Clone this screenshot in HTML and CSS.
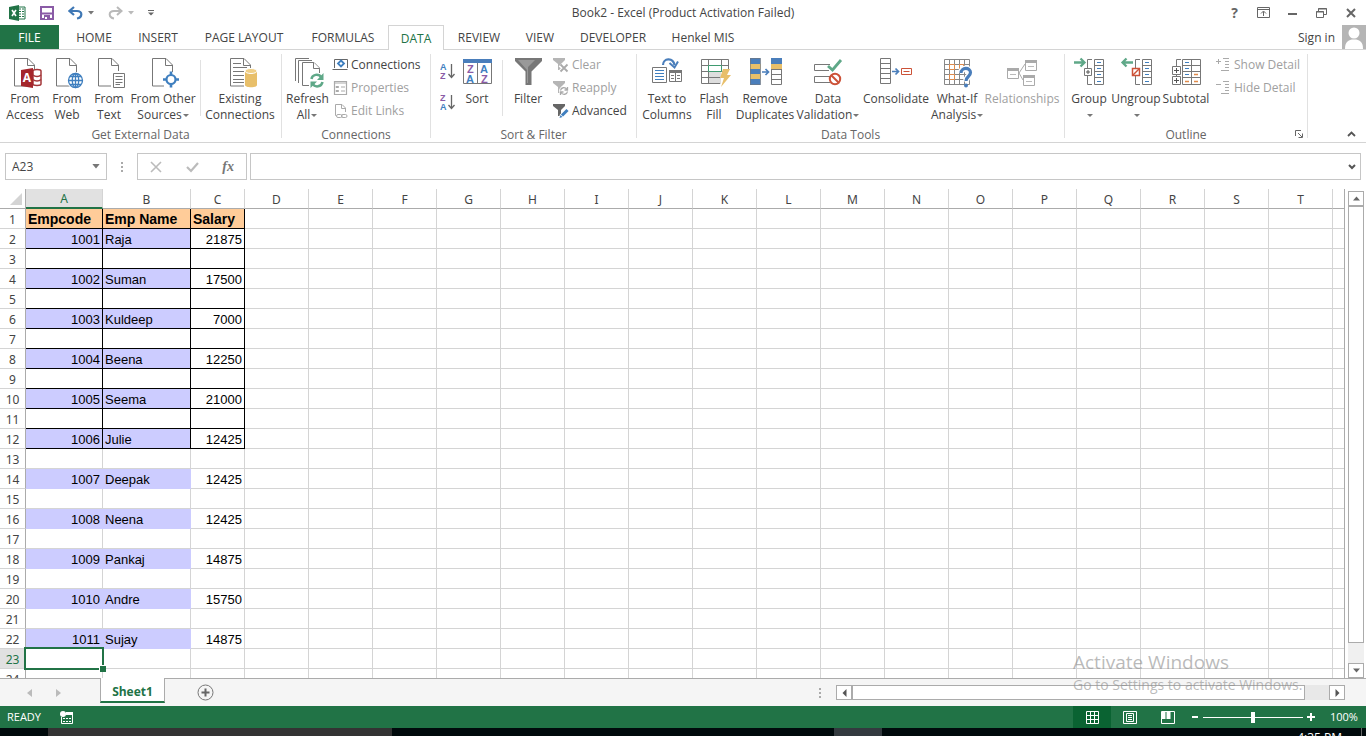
FILE: index.html
```html
<!DOCTYPE html>
<html lang="en">
<head>
<meta charset="utf-8">
<title>Book2 - Excel (Product Activation Failed)</title>
<link rel="stylesheet" href="styles.css">
</head>
<body>
<svg class="defs" aria-hidden="true">
  <symbol id="doc" viewBox="0 0 32 32"><path d="M5.500 2.500H19L25.500 9V30H5.500Z" fill="#fff" stroke="#777"/><path d="M18.500 2.500V9.500H25.500" fill="none" stroke="#777"/></symbol>
  <symbol id="arrow-down" viewBox="0 0 6 4"><path d="M0 0H6L3 3.500Z" fill="#777"/></symbol>
</svg>

<header class="titlebar">
  <div class="quick">
    <svg class="logo" width="17" height="16" viewBox="0 0 17 16"><path d="M9 2h7v12H9z" fill="#fff" stroke="#217346"/><path d="M10 4h5M10 6.500h5M10 9h5M10 11.500h5" stroke="#217346" stroke-dasharray="2 1"/><path d="M0 2L10 0V16L0 14Z" fill="#217346"/><path d="M3 5l4 6M7 5l-4 6" stroke="#fff" stroke-width="1.600"/></svg>
    <button class="qbtn" aria-label="Save"><svg width="14" height="14" viewBox="0 0 14 14"><path d="M1 1H13V13H1Z" fill="#fff" stroke="#8a5ba6" stroke-width="2"/><path d="M1 7.500H13" stroke="#8a5ba6" stroke-width="2"/><path d="M4 9H10V14H4Z" fill="#8a5ba6"/><path d="M5 11h2v2H5z" fill="#fff"/></svg></button>
    <button class="qbtn undo" aria-label="Undo"><svg width="15" height="14" viewBox="0 0 15 14"><path d="M6 1L1.500 5L6 9M2 5H9C15 5 14.500 11.500 9 12.500" fill="none" stroke="#3f78b5" stroke-width="2.200"/></svg><svg class="tri" width="6" height="4"><use href="#arrow-down"/></svg></button>
    <button class="qbtn redo" aria-label="Redo"><svg width="15" height="14" viewBox="0 0 15 14"><path d="M9 1L13.500 5L9 9M13 5H6C0 5 .5 11.500 6 12.500" fill="none" stroke="#b9b9b9" stroke-width="2"/></svg><svg class="tri faint" width="6" height="4"><use href="#arrow-down"/></svg></button>
    <button class="qbtn" aria-label="Customize Quick Access Toolbar"><svg width="6" height="6" viewBox="0 0 6 6"><path d="M0 .5H6" stroke="#666"/><path d="M0 2.500H6L3 5.500Z" fill="#666"/></svg></button>
  </div>
  <h1 class="title">Book2 - Excel (Product Activation Failed)</h1>
  <div class="window-buttons">
    <button aria-label="Help"><b>?</b></button>
    <button aria-label="Ribbon Display Options"><svg width="13" height="11" viewBox="0 0 13 11"><path d="M.5 .5H12.500V10.500H.5ZM.5 2.500H12.500M6.500 9V4.500M4 6.500L6.500 4L9 6.500" fill="none" stroke="#666"/></svg></button>
    <button aria-label="Minimize"><svg width="9" height="11" viewBox="0 0 9 11"><path d="M0 7H9" stroke="#666" stroke-width="2"/></svg></button>
    <button aria-label="Restore"><svg width="11" height="10" viewBox="0 0 11 10"><path d="M.5 3.500H7.500V9.500H.5ZM2.500 3.500V.5H10.500V6.500H7.500" fill="none" stroke="#666"/><path d="M0 4H8M2 1H11" stroke="#666"/></svg></button>
    <button aria-label="Close"><svg width="10" height="10" viewBox="0 0 10 10"><path d="M1 1L9 9M9 1L1 9" stroke="#666" stroke-width="2"/></svg></button>
  </div>
</header>

<nav class="tabs">
  <button class="tab file">FILE</button>
  <button class="tab w64">HOME</button>
  <button class="tab w64">INSERT</button>
  <button class="tab w108">PAGE LAYOUT</button>
  <button class="tab w90">FORMULAS</button>
  <button class="tab w56 active">DATA</button>
  <button class="tab w70">REVIEW</button>
  <button class="tab w52">VIEW</button>
  <button class="tab w94">DEVELOPER</button>
  <button class="tab w86">Henkel MIS</button>
  <a class="signin" href="#">Sign in</a>
  <svg class="avatar" width="24" height="24" viewBox="0 0 24 24"><path d="M0 0H24V24H0Z" fill="#b5b5b5"/><circle cx="12" cy="8" r="5.500" fill="#fff"/><path d="M3 24C3 17 6 14.500 12 14.500S21 17 21 24Z" fill="#fff"/></svg>
</nav>

<section class="ribbon">
  <div class="group g-external">
    <div class="tools">
      <button class="big w42"><svg class="ic" viewBox="0 0 32 32"><use href="#doc"/><path d="M23 13h10v18H23z" fill="#fff"/><path d="M24 15c0-2 8-2 8 0v13c0 2-8 2-8 0Z" fill="#fff" stroke="#a4373a" stroke-width="1.500"/><path d="M24 19c2 2 6 2 8 0M24 23.500c2 2 6 2 8 0" fill="none" stroke="#a4373a" stroke-width="1.500"/><path d="M12 14L24 12V32L12 30Z" fill="#a4262c"/><text x="18" y="26" text-anchor="middle" class="glyph-a">A</text></svg>From<br>Access</button>
      <button class="big w42"><svg class="ic" viewBox="0 0 32 32"><use href="#doc"/><circle cx="24.500" cy="24.500" r="8.500" fill="#fff"/><g fill="none" stroke="#3f7fbf" stroke-width="1.300"><circle cx="24.500" cy="24.500" r="7"/><ellipse cx="24.500" cy="24.500" rx="3.200" ry="7"/><path d="M17.500 24.500H31.500M24.500 17.500V31.500M19 20.500H30M19 28.500H30"/></g></svg>From<br>Web</button>
      <button class="big w42"><svg class="ic" viewBox="0 0 32 32"><use href="#doc"/><path d="M18 15H32V32H18Z" fill="#fff"/><path d="M20.500 17.500H31.500V31.500H20.500Z" fill="#fff" stroke="#777"/><path d="M22.500 20.500H29.500M22.500 23.500H29.500M22.500 26.500H29.500M22.500 28.500H27" stroke="#777"/></svg>From<br>Text</button>
      <button class="big w66"><svg class="ic" viewBox="0 0 32 32"><use href="#doc"/><path d="M17 16H32V32H17Z" fill="#fff"/><circle cx="24" cy="23.500" r="4.500" fill="#fff" stroke="#3f7fbf" stroke-width="2.200"/><path d="M16 23.500H20M28 23.500H32M24 15.500V19M24 28V31.500" stroke="#3f7fbf" stroke-width="2.600"/></svg>From Other<br><span class="drop">Sources</span></button>
      <span class="rule"></span>
      <button class="big w70"><svg class="ic" viewBox="0 0 32 32"><use href="#doc" x="1"/><path d="M9 7.500H17M9 11.500H23M9 15.500H23M9 19.500H23M9 23.500H20M9 26.500H20" stroke="#777"/><path d="M20 12H33V32H20Z" fill="#fff"/><path d="M21 15V29C21 32 33 32 33 29V15Z" fill="#e8bf6a"/><ellipse cx="27" cy="15" rx="6" ry="2.500" fill="#f0cf87" stroke="#fff"/></svg>Existing<br>Connections</button>
    </div>
    <div class="caption">Get External Data</div>
  </div>

  <div class="group g-connections">
    <div class="tools">
      <button class="big w42"><svg class="ic" viewBox="0 0 32 32"><g fill="#fff" stroke="#777"><path d="M4.500 25V2.500H18"/><path d="M7.500 27V4.500H21"/><path d="M11.500 29.500V6.500H23L28.500 12V29.500Z"/><path d="M22.500 6.500V12.500H28.500"/></g><path d="M18 17H33V32H18Z" fill="#fff"/><g fill="none" stroke="#5fa888" stroke-width="2.500"><path d="M20.500 23C21 18.500 27.500 17 30.500 21.500"/><path d="M31.500 26C30.500 31 24 32 21.500 27.500"/></g><path d="M32.500 17V24H26ZM19.500 32V25.500H26Z" fill="#5fa888"/></svg>Refresh<br><span class="drop">All</span></button>
      <div class="stack">
        <button class="small"><svg width="16" height="16" viewBox="0 0 16 16"><path d="M2.500 11V2.500H15.500V11M.5 12.500H15.500" fill="none" stroke="#666"/><path d="M9 3.500L12 6.500L9 9.500L6 6.500Z" fill="none" stroke="#3f7fbf" stroke-width="1.800"/></svg>Connections</button>
        <button class="small" disabled><svg width="16" height="16" viewBox="0 0 16 16"><path d="M2.500 1.500H14.500V14.500H2.500ZM2.500 3H14.500" fill="none" stroke="#aaa" stroke-width="1.200"/><path d="M4 6.500h2.500v1H4zM4 10.500h2.500v1H4z" fill="#aaa" stroke="#aaa"/><path d="M9 7H13M9 11H13" stroke="#aaa"/></svg>Properties</button>
        <button class="small" disabled><svg width="16" height="16" viewBox="0 0 16 16"><path d="M4 12.500H3.500V1.500H10L13.500 5V9M9.500 1.500V5.500H13" fill="none" stroke="#aaa"/><path d="M6 11.500h2.500a1.500 1.500 0 0 1 0 3H6a1.500 1.500 0 0 1 0-3ZM11 11.500h2.500a1.500 1.500 0 0 1 0 3H11a1.500 1.500 0 0 1 0-3Z" fill="none" stroke="#aaa"/></svg>Edit Links</button>
      </div>
    </div>
    <div class="caption">Connections</div>
  </div>

  <div class="group g-sort">
    <div class="tools">
      <div class="orders">
        <button class="order" aria-label="Sort A to Z"><svg width="16" height="18" viewBox="0 0 16 18"><text x="0" y="8" class="glyph-s blue">A</text><text x="0" y="17" class="glyph-s purple">Z</text><path d="M11.500 2V15M8.500 12L11.500 15.500L14.500 12" fill="none" stroke="#666" stroke-width="1.300"/></svg></button>
        <button class="order" aria-label="Sort Z to A"><svg width="16" height="18" viewBox="0 0 16 18"><text x="0" y="8" class="glyph-s purple">Z</text><text x="0" y="17" class="glyph-s blue">A</text><path d="M11.500 2V15M8.500 12L11.500 15.500L14.500 12" fill="none" stroke="#666" stroke-width="1.300"/></svg></button>
      </div>
      <button class="big w42"><svg class="ic" viewBox="0 0 32 32"><path d="M2.500 4.500H30.500V27.500H2.500Z" fill="#fff" stroke="#777"/><path d="M2 3H31V7H2Z" fill="#4a7ebb"/><path d="M16.500 7V28" stroke="#777"/><text x="6" y="17" class="glyph-m purple">Z</text><text x="5" y="27" class="glyph-m blue">A</text><text x="19" y="17" class="glyph-m blue">A</text><text x="20" y="27" class="glyph-m purple">Z</text></svg>Sort</button>
      <span class="rule"></span>
      <button class="big w42"><svg class="ic" viewBox="0 0 32 32"><path d="M3 2H30V5L19.500 15.500V29H13.500V15.500L3 5Z" fill="#777"/><path d="M6 4H23L16 11V27H15V14Z" fill="#999"/></svg>Filter</button>
      <div class="stack">
        <button class="small" disabled><svg width="16" height="16" viewBox="0 0 16 16"><path d="M0 1H12V3L8 7V13H5V7L0 3Z" fill="#b5b5b5"/><path d="M7 8l8 7M15 7l-8 8" stroke="#fff" stroke-width="4"/><path d="M7.500 7.500l7 7M14.500 7.500l-7 7" stroke="#aaa" stroke-width="1.800"/></svg>Clear</button>
        <button class="small" disabled><svg width="16" height="16" viewBox="0 0 16 16"><path d="M0 1H12V3L8 7V13H5V7L0 3Z" fill="#b5b5b5"/><circle cx="11" cy="11" r="5" fill="#fff"/><path d="M7.500 10.500C8 7.500 12 6.500 14 9.500M14.500 7v3h-3M14.500 11.500C14 14.500 10 15.500 8 12.500M7.500 15v-3h3" fill="none" stroke="#aaa" stroke-width="1.300"/></svg>Reapply</button>
        <button class="small"><svg width="16" height="16" viewBox="0 0 16 16"><path d="M0 1H12V3L8 7V13H5V7L0 3Z" fill="#666"/><path d="M8 14L15 7" stroke="#fff" stroke-width="5"/><path d="M9 12.500L14.500 7" stroke="#3f7fbf" stroke-width="3"/><path d="M6.500 15l1-3l2 2Z" fill="#3f7fbf"/></svg>Advanced</button>
      </div>
    </div>
    <div class="caption">Sort &amp; Filter</div>
  </div>

  <div class="group g-data">
    <div class="tools">
      <button class="big w52"><svg class="ic" viewBox="0 0 32 32"><path d="M1.500 11.500H15.500V26.500H1.500Z" fill="#fff" stroke="#777"/><path d="M4 14.500H13M4 17.500H13M4 20.500H13M4 23.500H13" stroke="#3f7fbf"/><path d="M18.500 14.500H30.500V25.500H18.500ZM24.500 17V25" fill="#fff" stroke="#777"/><path d="M18 14h13v3H18z" fill="#777"/><path d="M20 19.500H23M20 22.500H23M26 19.500H29M26 22.500H29" stroke="#777"/><path d="M12 9C12 2 22 1 23.500 9" fill="none" stroke="#4a7ebb" stroke-width="2.200"/><path d="M18.500 7L23.500 11.500L27 5.500" fill="none" stroke="#4a7ebb" stroke-width="2"/></svg>Text to<br>Columns</button>
      <button class="big w42"><svg class="ic" viewBox="0 0 32 32"><path d="M10.500 16H23V28H10.500Z" fill="#ddd"/><path d="M3.500 3.500H30.500V14M3.500 3.500V27.500H22M3.500 9.500H30.500M3.500 15.500H26M3.500 21.500H22M10.500 3.500V27.500M23.500 3.500V15.500" fill="none" stroke="#777"/><path d="M10.500 9.500H23.500V15.500H10.500Z" fill="#fff" stroke="#3f9b70"/><path d="M25 13H32L29 19H33L23 31L26 22H22Z" fill="#e8bf6a"/></svg>Flash<br>Fill</button>
      <button class="big w60"><svg class="ic" viewBox="0 0 32 32"><path d="M1 2h10.500v27H1z" fill="#4a7ebb"/><path d="M1 8h10.500v5H1zM1 18h10.500v5H1z" fill="#e8bf6a"/><path d="M1.500 2.500H11.500V28.500H1.500Z" fill="none" stroke="#777" stroke-opacity=".6"/><path d="M13 16H19M16.500 13L19.500 16L16.500 19" fill="none" stroke="#4a7ebb" stroke-width="1.700"/><path d="M22.500 2.500H32.500V28.500H22.500ZM22.500 18.500H32.500M22.500 23.500H32.500" fill="#fff" stroke="#777"/><path d="M22 2h11v6H22z" fill="#4a7ebb"/><path d="M22 8h11v5H22z" fill="#e8bf6a"/><path d="M22 13.500H33" stroke="#777"/></svg>Remove<br>Duplicates</button>
      <button class="big w66"><svg class="ic" viewBox="0 0 32 32"><path d="M18 8.500H2.500V14.500H17M18 20.500H2.500V26.500H18" fill="none" stroke="#777"/><path d="M16 10L20.500 14L29 4" fill="none" stroke="#5fa888" stroke-width="2.800"/><circle cx="23" cy="23" r="5.200" fill="#fff" stroke="#cc5238" stroke-width="2"/><path d="M19.500 19.500L26.500 26.500" stroke="#cc5238" stroke-width="2"/></svg>Data<br><span class="drop">Validation</span></button>
      <button class="big w70"><svg class="ic" viewBox="0 0 32 32"><path d="M.5 2.500H10.500V27.500H.5ZM.5 7.500H10.500M.5 12.500H10.500M.5 17.500H10.500M.5 22.500H10.500" fill="#fff" stroke="#777"/><path d="M12 15.500H18M15.500 12.500L18.500 15.500L15.500 18.500" fill="none" stroke="#4a7ebb" stroke-width="1.700"/><path d="M21.500 12.500H31.500V18.500H21.500ZM23.500 15.500H29.500" fill="#fff" stroke="#cc5238"/></svg>Consolidate</button>
      <button class="big w52"><svg class="ic" viewBox="0 0 32 32"><path d="M3.500 3.500H28.500V28.500H3.500ZM3.500 8.500H28.500M3.500 13.500H28.500M3.500 18.500H28.500M3.500 23.500H28.500M8.500 3.500V28.500M13.500 3.500V28.500M18.500 3.500V28.500M23.500 3.500V28.500" fill="#fff" stroke="#888"/><path d="M8.500 8.500h5v5h-5zM8.500 18.500h5v5h-5zM18.500 8.500h4v4h-4z" fill="#fff" stroke="#e08a4a"/><path d="M20 17C20 11 29.500 11 29.500 16.500C29.500 20.500 25 20.500 25 25.500" fill="none" stroke="#fff" stroke-width="6"/><path d="M20 17C20 11 29.500 11 29.500 16.500C29.500 20.500 25 20.500 25 25" fill="none" stroke="#4a7ebb" stroke-width="3.200"/><circle cx="25" cy="29.500" r="2" fill="#4a7ebb"/></svg>What-If<br><span class="drop">Analysis</span></button>
      <button class="big w78" disabled><svg class="ic" viewBox="0 0 32 32"><path d="M13 17L19 8M13 17L17 24" stroke="#aaa"/><path d="M1.500 12.500H12.500V22.500H1.500ZM19.500 4.500H30.500V14.500H19.500ZM17.500 19.500H28.500V29.500H17.500Z" fill="#fff" stroke="#aaa"/><path d="M1 12h12v3H1zM19 4h12v3H19zM17 19h12v3H17z" fill="#aaa"/><path d="M4 18.500H10M22 10.500H28M20 25.500H26" stroke="#bbb"/></svg>Relationships</button>
    </div>
    <div class="caption">Data Tools</div>
  </div>

  <div class="group g-outline">
    <div class="tools">
      <button class="big w44"><svg class="ic" viewBox="0 0 32 32"><path d="M1 6.500H11M7.500 2.500L11.500 6.500L7.500 10.500" fill="none" stroke="#5fa888" stroke-width="2.300"/><path d="M19 3.500H14.500V28.500H19" fill="none" stroke="#777"/><path d="M11.500 12.500H18.500V19.500H11.500Z" fill="#fff" stroke="#777"/><path d="M13 16H17M15 14V18" stroke="#555"/><path d="M21.500 3.500H30.500V28.500H21.500ZM21.500 9.500H30.500M21.500 15.500H30.500M21.500 21.500H30.500" fill="#fff" stroke="#777"/><path d="M24 6.500H28M24 12.500H28M24 18.500H28M24 25.500H28" stroke="#3f7fbf"/></svg>Group<br><span class="drop"></span></button>
      <button class="big w50"><svg class="ic" viewBox="0 0 32 32"><path d="M3 6.500H13M6.500 2.500L2.500 6.500L6.500 10.500" fill="none" stroke="#5fa888" stroke-width="2.300"/><path d="M20 3.500H15.500V28.500H20" fill="none" stroke="#777"/><path d="M12.500 12.500H19.500V19.500H12.500Z" fill="#fff" stroke="#cc5238" stroke-width="1.500"/><path d="M13 19L19 13" stroke="#cc5238" stroke-width="1.500"/><path d="M22.500 3.500H31.500V28.500H22.500ZM22.500 9.500H31.500M22.500 15.500H31.500M22.500 21.500H31.500" fill="#fff" stroke="#777"/><path d="M25 6.500H29M25 12.500H29M25 18.500H29M25 25.500H29" stroke="#3f7fbf"/></svg>Ungroup<br><span class="drop"></span></button>
      <button class="big w50"><svg class="ic" viewBox="0 0 32 32"><path d="M11 3.500H6.500V22" fill="none" stroke="#777"/><path d="M2.500 10.500H10.500V18.500H2.500ZM2.500 20.500H10.500V28.500H2.500Z" fill="#fff" stroke="#777"/><path d="M4 14.500H9M6.500 12V17M4 24.500H9M6.500 22V27" stroke="#555"/><path d="M12.500 3.500H30.500V28.500H12.500ZM12.500 9.500H30.500M12.500 15.500H30.500M12.500 21.500H30.500M21.500 3.500V28.500" fill="#fff" stroke="#777"/><path d="M15 6.500H19M15 12.500H19M15 18.500H19" stroke="#3f7fbf"/><path d="M24 18.500H28M15 25.500H19M24 25.500H28" stroke="#e08a4a" stroke-width="1.500"/></svg>Subtotal</button>
      <div class="stack">
        <button class="small" disabled><svg width="16" height="16" viewBox="0 0 16 16"><path d="M1 4.500H6M3.500 2V7M8 1.500H14M10 4.500H14M10 7.500H14M10 10.500H14M6 13.500H14" stroke="#aaa"/></svg>Show Detail</button>
        <button class="small" disabled><svg width="16" height="16" viewBox="0 0 16 16"><path d="M1 4.500H6M8 1.500H14M10 4.500H14M10 7.500H14M10 10.500H14M6 13.500H14" stroke="#aaa"/></svg>Hide Detail</button>
      </div>
    </div>
    <div class="caption outline-caption">Outline<button class="launcher" aria-label="Outline settings"><svg width="8" height="8" viewBox="0 0 8 8"><path d="M.5 6V.5H6M3 3L7 7M7.500 3.500V7.500H3.500" fill="none" stroke="#666"/></svg></button></div>
  </div>
  <button class="collapse" aria-label="Collapse the Ribbon"><svg width="9" height="6" viewBox="0 0 9 6"><path d="M1 5L4.500 1.500L8 5" fill="none" stroke="#555" stroke-width="1.800"/></svg></button>
</section>

<section class="formula">
  <label class="namebox"><input type="text" value="A23" aria-label="Name Box"><svg width="8" height="5" viewBox="0 0 6 4"><use href="#arrow-down"/></svg></label>
  <span class="dots"></span>
  <div class="fxbox">
    <button aria-label="Cancel"><svg width="12" height="12" viewBox="0 0 12 12"><path d="M1 1L11 11M11 1L1 11" stroke="#bbb" stroke-width="1.600"/></svg></button>
    <button aria-label="Enter"><svg width="13" height="12" viewBox="0 0 13 12"><path d="M1 6L5 10L12 2" fill="none" stroke="#bbb" stroke-width="2.200"/></svg></button>
    <button class="fx" aria-label="Insert Function"><i>fx</i></button>
  </div>
  <label class="entry"><input type="text" aria-label="Formula Bar"><svg width="8" height="6" viewBox="0 0 8 6"><path d="M1 1L4 4L7 1" fill="none" stroke="#555" stroke-width="2"/></svg></label>
</section>

<main class="workspace">
  <div class="sheet">
    <table class="grid" id="grid"></table>
  </div>
  <div class="vscroll">
    <button aria-label="Scroll up"><svg width="7" height="5" viewBox="0 0 7 5"><path d="M0 4.500L3.500 .5L7 4.500Z" fill="#666"/></svg></button>
    <div class="vthumb"></div>
    <div class="vtrack"></div>
    <button aria-label="Scroll down"><svg width="7" height="5" viewBox="0 0 7 5"><path d="M0 .5L3.500 4.500L7 .5Z" fill="#666"/></svg></button>
  </div>
</main>

<section class="sheetbar">
  <div class="nav">
    <button aria-label="Previous sheet"><svg width="5" height="8" viewBox="0 0 5 8"><path d="M5 0V8L0 4Z" fill="#bbb"/></svg></button>
    <button aria-label="Next sheet"><svg width="5" height="8" viewBox="0 0 5 8"><path d="M0 0V8L5 4Z" fill="#bbb"/></svg></button>
  </div>
  <button class="sheettab">Sheet1</button>
  <button class="add" aria-label="New sheet"><svg width="17" height="17" viewBox="0 0 17 17"><circle cx="8.500" cy="8.500" r="7.500" fill="none" stroke="#777"/><path d="M4.500 8.500H12.500M8.500 4.500V12.500" stroke="#666" stroke-width="2"/></svg></button>
  <span class="dots"></span>
  <div class="hscroll">
    <button aria-label="Scroll left"><svg width="5" height="8" viewBox="0 0 5 8"><path d="M4.500 0V8L.5 4Z" fill="#555"/></svg></button>
    <div class="hthumb"></div>
    <div class="htrack"></div>
    <button aria-label="Scroll right"><svg width="5" height="8" viewBox="0 0 5 8"><path d="M.5 0V8L4.500 4Z" fill="#555"/></svg></button>
  </div>
</section>

<footer class="status">
  <span class="ready">READY</span>
  <button class="macro" aria-label="Record Macro"><svg width="14" height="13" viewBox="0 0 14 13"><path d="M2 2.500H12.500V12.500H1.500V6" fill="none" stroke="#fff"/><path d="M6 1H13V4H6Z" fill="#fff"/><circle cx="3" cy="3" r="3" fill="#fff"/><path d="M3 7h2v1H3zM6 7h2v1H6zM9 7h2v1H9zM3 10h2v1H3zM6 10h2v1H6zM9 10h2v1H9z" fill="#fff"/></svg></button>
  <div class="views">
    <button class="view on" aria-label="Normal view"><svg width="13" height="13" viewBox="0 0 13 13"><path d="M.5 .5H12.500V12.500H.5ZM.5 4.500H12.500M.5 8.500H12.500M4.500 .5V12.500M8.500 .5V12.500" fill="none" stroke="#fff"/></svg></button>
    <button class="view" aria-label="Page Layout view"><svg width="14" height="13" viewBox="0 0 14 13"><path d="M.5 .5H13.500V12.500H.5ZM3.500 2.500H10.500V10.500H3.500ZM5 4.500H9M5 6.500H9M5 8.500H9" fill="none" stroke="#fff"/></svg></button>
    <button class="view" aria-label="Page Break preview"><svg width="14" height="13" viewBox="0 0 14 13"><path d="M.5 .5H13.500V12.500H.5Z" fill="none" stroke="#fff"/><path d="M1 1H4.500V8H1ZM5.500 1H9.500V8H5.500Z" fill="#fff"/></svg></button>
  </div>
  <button class="zoom" aria-label="Zoom out"><svg width="6" height="6" viewBox="0 0 6 6"><path d="M0 3H6" stroke="#fff" stroke-width="2"/></svg></button>
  <input class="slider" type="range" min="10" max="190" value="100" aria-label="Zoom">
  <button class="zoom" aria-label="Zoom in"><svg width="8" height="8" viewBox="0 0 8 8"><path d="M0 4H8M4 0V8" stroke="#fff" stroke-width="2"/></svg></button>
  <span class="percent">100%</span>
</footer>

<div class="taskbar"><span class="search"></span><span class="running"></span><span class="clock">4:35 PM</span><span class="peek"></span></div>

<div class="watermark"><p class="wm-title">Activate Windows</p><p class="wm-text">Go to Settings to activate Windows.</p></div>
<script src="grid.js"></script>
</body>
</html>
```
FILE: styles.css
```css
* { box-sizing: border-box; }
html, body { height: 100%; }
body {
  margin: 0;
  display: flex;
  flex-direction: column;
  overflow: hidden;
  background: #fff;
  color: #444;
  font: 12px/16px "Open Sans", "Noto Sans", sans-serif;
}
button, input { font: inherit; color: inherit; }
button { background: none; border: 0; padding: 0; margin: 0; }
svg { flex: none; }
.defs { position: absolute; width: 0; height: 0; }

/* title bar */
.titlebar { display: grid; grid-template-columns: 1fr auto 1fr; align-items: center; height: 25px; }
.quick { display: flex; align-items: center; padding-left: 9px; }
.qbtn { display: flex; align-items: center; height: 22px; margin-left: 14px; }
.tri { margin-left: 5px; }
.faint { opacity: .5; }
.title { margin: 0; font-size: 12px; font-weight: 400; }
.window-buttons { display: flex; justify-content: flex-end; align-items: center; padding-right: 1px; }
.window-buttons button { display: flex; align-items: center; justify-content: center; width: 29px; height: 22px; color: #666; font-size: 14px; }

/* tabs */
.tabs { display: flex; height: 25px; border-bottom: 1px solid #d4d4d4; }
.tab { padding-top: 2px; }
.tab.file { width: 59px; background: #217346; color: #fff; margin-right: 3px; }
.tab.active { height: 25px; background: #fff; border: 1px solid #d4d4d4; border-bottom: 0; color: #217346; }
.signin { margin-left: auto; margin-right: 7px; color: #444; text-decoration: none; line-height: 25px; }

/* ribbon */
.ribbon { display: flex; height: 93px; border-bottom: 1px solid #d4d4d4; }
.group { display: flex; flex-direction: column; margin: 4px 0; border-right: 1px solid #e1e1e1; }
.g-external { width: 282px; }
.g-connections { width: 149px; }
.g-sort { width: 206px; }
.g-data { width: 428px; }
.g-outline { width: 243px; }
.tools { display: flex; flex: 1; min-height: 0; padding: 2px 0 0 4px; }
.g-outline .tools { padding-left: 2px; }
.big { display: block; align-self: flex-start; text-align: center; white-space: nowrap; line-height: 16px; }
.ic { display: block; width: 32px; height: 32px; margin: 0 auto 3px; overflow: visible; }
.w42 { width: 42px; } .w44 { width: 44px; } .w50 { width: 50px; } .w52 { width: 52px; }
.w56 { width: 56px; } .w60 { width: 60px; } .w64 { width: 64px; } .w66 { width: 66px; }
.w70 { width: 70px; } .w78 { width: 78px; } .w86 { width: 86px; }
.w90 { width: 90px; } .w94 { width: 94px; } .w108 { width: 108px; }
.drop::after { content: ""; display: inline-block; margin-left: 1px; vertical-align: middle; border: 3px solid transparent; border-top-color: #777; border-bottom: 0; }
.rule { width: 1px; height: 56px; margin: 4px 4px 0; background: #e1e1e1; }
.stack { display: flex; flex-direction: column; margin: -3px 0 0 4px; }
.small { display: flex; flex: none; align-items: center; gap: 3px; height: 23px; white-space: nowrap; }
button:disabled { color: #a0a0a0; }
.caption { height: 17px; text-align: center; line-height: 27px; color: #666; }
.outline-caption { display: grid; grid-template-columns: 1fr auto 1fr; }
.outline-caption::before { content: ""; }
.launcher { justify-self: end; align-self: start; padding: 9px 4px 0 0; line-height: 0; }
.orders { display: flex; flex-direction: column; gap: 13px; width: 21px; padding: 6px 0 0 4px; }
.order { line-height: 0; height: 18px; }
.glyph-a { font: bold 12px "Open Sans", sans-serif; fill: #fff; }
.glyph-s { font: bold 9px "Liberation Sans", sans-serif; }
.glyph-m { font: bold 11px "Liberation Sans", sans-serif; }
.blue { fill: #3f7fbf; }
.purple { fill: #8a5ba6; }
.collapse { margin: auto 10px 5px auto; line-height: 0; }

/* formula bar */
.formula { display: flex; align-items: center; padding: 10px 5px 9px; }
.namebox, .fxbox, .entry { display: flex; align-items: center; height: 27px; border: 1px solid #c6c6c6; background: #fff; }
.namebox { width: 102px; padding: 0 6px; }
.namebox input, .entry input { flex: 1; width: 100%; min-width: 0; border: 0; padding: 0; outline: 0; background: none; font-size: 12px; }
.dots { width: 2px; height: 10px; background: repeating-linear-gradient(#aaa 0 2px, transparent 2px 4px); }
.formula .dots { margin: 0 14px; }
.fxbox { width: 110px; justify-content: space-between; padding: 0 12px; margin-right: 3px; }
.fxbox button { display: flex; }
.fxbox .fx { font: bold 14px "Liberation Serif", serif; color: #777; }
.entry { flex: 1; padding: 0 4px; }

/* worksheet */
.workspace { display: flex; flex: 1; min-height: 0; }
.sheet { flex: 1; min-width: 0; overflow: hidden; border-right: 1px solid #ababab; }
.grid { width: 100%; table-layout: fixed; border-collapse: separate; border-spacing: 0; font: 13px/17px "Liberation Sans", Arial, sans-serif; color: #000; }
.grid th, .grid td { height: 20px; padding: 2px 2px 0; border-right: 1px solid #d4d4d4; border-bottom: 1px solid #d4d4d4; white-space: nowrap; overflow: hidden; }
.grid th { padding: 2px 0 0; font: 12px/17px "Noto Sans", sans-serif; color: #444; text-align: center; }
.grid thead th { border-bottom-color: #ababab; }
.grid tr > th:first-child { border-right-color: #ababab; }
.grid thead th:last-child, .grid td:last-child { border-right: 0; }
.c-head { width: 26px; } .c-a { width: 77px; } .c-b { width: 88px; } .c-c { width: 54px; } .c-x { width: 64px; }
.grid thead th.current { border-bottom: 2px solid #217346; background: #e1e1e1; color: #217346; line-height: 16px; }
.grid tbody th.current { background: #e1e1e1; color: #217346; }
.grid .corner { position: relative; }
.corner::after { content: ""; position: absolute; right: 3px; bottom: 3px; border: 6px solid #d4d4d4; border-top-color: transparent; border-left-color: transparent; }
.grid td.boxed { border-color: #000; }
.grid td.title-cell { background: #fc9; font-size: 14px; font-weight: bold; }
.grid td.fill { background: #ccf; }
.grid td.fill:not(.boxed) { border-color: #ccf; }
.grid td.num { text-align: right; }
.grid td.selected { position: relative; overflow: visible; }
.selected::before { content: ""; position: absolute; inset: -2px; border: 2px solid #217346; }
.selected::after { content: ""; position: absolute; right: -4px; bottom: -4px; width: 6px; height: 6px; background: #217346; border: 1px solid #fff; border-right: 0; border-bottom: 0; }
.vscroll { display: flex; flex-direction: column; width: 21px; padding: 2px 2px 0 3px; }
.vscroll button, .hscroll button { display: flex; flex: none; align-items: center; justify-content: center; width: 16px; height: 15px; border: 1px solid #ababab; background: #fff; }
.vthumb { flex: 1; border: 1px solid #ababab; background: #fff; }
.vtrack { height: 20px; background: #f0f0f0; }

/* sheet tabs */
.sheetbar { display: flex; height: 28px; border-top: 1px solid #ababab; background: #f5f5f5; align-items: center; }
.nav { display: flex; gap: 24px; width: 100px; padding-left: 27px; }
.nav button { display: flex; }
.sheettab { align-self: flex-start; width: 65px; height: 25px; margin-top: -1px; padding-top: 4px; background: #fff; border: 1px solid #ababab; border-top: 0; border-bottom: 2px solid #217346; color: #217346; font-weight: bold; }
.add { display: flex; margin-left: 32px; }
.sheetbar .dots { margin-left: auto; margin-right: 15px; }
.hscroll { display: flex; width: 509px; margin-right: 21px; }
.hthumb { flex: 1; border: 1px solid #ababab; background: #fff; }
.htrack { width: 24px; background: #e8e8e8; }

/* status bar */
.status { display: flex; align-items: center; height: 22px; background: #217346; color: #fff; font-size: 11px; }
.ready { padding-left: 7px; }
.macro { display: flex; margin-left: 19px; }
.views { display: flex; margin-left: auto; align-self: stretch; }
.view { display: flex; align-items: center; justify-content: center; width: 38px; }
.view.on { background: #0a6332; }
.zoom { display: flex; align-items: center; justify-content: center; width: 16px; height: 16px; }
.slider { width: 100px; height: 16px; margin: 0; appearance: none; background: linear-gradient(#fff, #fff) center / 100% 1px no-repeat; }
.slider::-webkit-slider-thumb { appearance: none; width: 4px; height: 11px; background: #fff; }
.percent { width: 47px; padding-left: 11px; }

/* taskbar strip */
.taskbar { display: flex; height: 8px; background: #000a0c; overflow: hidden; color: #fff; }
.search { width: 344px; margin-left: 48px; background: #333; }
.running { width: 48px; margin-left: 442px; background: #333a3f; }
.clock { margin-left: auto; margin-top: 2px; line-height: 16px; }
.peek { width: 1px; margin: 0 4px 0 19px; background: #666; }

/* activation notice */
.watermark { position: absolute; right: 57px; bottom: 41px; width: 236px; color: rgba(140, 140, 140, .6); pointer-events: none; }
.watermark p { margin: 0; white-space: nowrap; }
.wm-title { font-size: 19px; line-height: 26px; }
.wm-text { font-size: 14px; line-height: 20px; }
```
FILE: grid.js
```js
const people = [
  [1001, "Raja", 21875], [1002, "Suman", 17500], [1003, "Kuldeep", 7000],
  [1004, "Beena", 12250], [1005, "Seema", 21000], [1006, "Julie", 12425],
  [1007, "Deepak", 12425], [1008, "Neena", 12425], [1009, "Pankaj", 14875],
  [1010, "Andre", 15750], [1011, "Sujay", 14875]
];
const letters = "ABCDEFGHIJKLMNOPQRST".split("");
const grid = document.getElementById("grid");

const widths = ["c-head", "c-a", "c-b", "c-c"].concat(Array(17).fill("c-x"), "");
let html = "<colgroup>" + widths.map(w => `<col class="${w}">`).join("") + "</colgroup>";
html += '<thead><tr><th class="corner"></th>' +
  letters.map(l => `<th scope="col"${l === "A" ? ' class="current"' : ""}>${l}</th>`).join("") +
  "<th></th></tr></thead><tbody>";

for (let row = 1; row <= 24; row++) {
  html += `<tr><th scope="row"${row === 23 ? ' class="current"' : ""}>${row}</th>`;
  const person = row % 2 === 0 ? people[row / 2 - 1] : null;
  for (let col = 0; col < 21; col++) {
    const names = [];
    let text = "";
    if (col < 3) {
      if (row <= 12) names.push("boxed");
      if (row === 1) {
        names.push("title-cell");
        text = ["Empcode", "Emp Name", "Salary"][col];
      } else if (person) {
        text = person[col];
        if (col < 2) names.push("fill");
        if (col !== 1) names.push("num");
      }
      if (row === 23 && col === 0) names.push("selected");
    }
    html += `<td class="${names.join(" ")}">${text}</td>`;
  }
  html += "</tr>";
}
grid.innerHTML = html + "</tbody>";
```
